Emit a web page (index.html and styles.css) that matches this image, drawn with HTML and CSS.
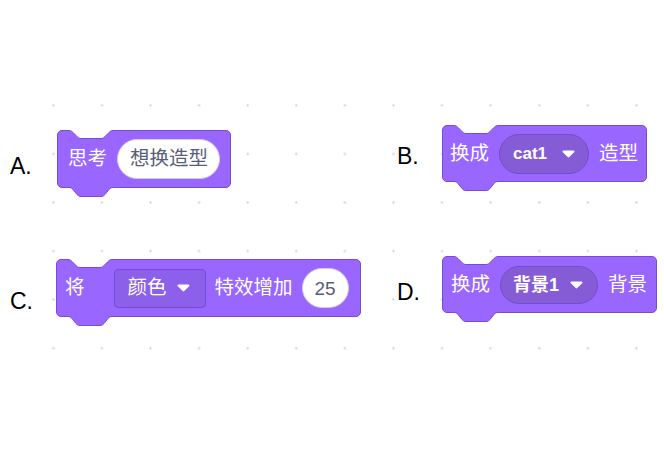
FILE: index.html
```html
<!DOCTYPE html>
<html lang="zh">
<head>
<meta charset="utf-8">
<title>Scratch 积木选择题</title>
<link rel="stylesheet" href="styles.css">
</head>
<body>
<div class="sheet">
  <div class="quiz">
    <div class="option opt-a">
      <span class="letter">A.</span>
      <div class="block block-a">
        <span class="notch"><svg width="44" height="9" viewBox="0 0 44 9"><path class="cut" d="M0,0 H44 V0.5 C42,0.5 41,1.5 40,2.5 L36,6.5 C35,7.5 34,8.5 32,8.5 H12 C10,8.5 9,7.5 8,6.5 L4,2.5 C3,1.5 2,0.5 0,0.5 Z"/><path class="edge" d="M0,0.5 C2,0.5 3,1.5 4,2.5 L8,6.5 C9,7.5 10,8.5 12,8.5 H32 C34,8.5 35,7.5 36,6.5 L40,2.5 C41,1.5 42,0.5 44,0.5"/></svg></span>
        <span class="text">思考</span>
        <span class="input">想换造型</span>
        <span class="tab"><svg width="44" height="11" viewBox="0 0 44 11"><path class="fill" d="M0,0 H44 V0.5 C42,0.5 41,1.5 40,2.5 L36,7.5 C35,8.5 34,9.5 32,9.5 H12 C10,9.5 9,8.5 8,7.5 L4,2.5 C3,1.5 2,0.5 0,0.5 Z"/><path class="edge" d="M0,0.5 C2,0.5 3,1.5 4,2.5 L8,7.5 C9,8.5 10,9.5 12,9.5 H32 C34,9.5 35,8.5 36,7.5 L40,2.5 C41,1.5 42,0.5 44,0.5"/></svg></span>
      </div>
    </div>
    <div class="option opt-b">
      <span class="letter">B.</span>
      <div class="block block-b">
        <span class="notch"><svg width="44" height="9" viewBox="0 0 44 9"><path class="cut" d="M0,0 H44 V0.5 C42,0.5 41,1.5 40,2.5 L36,6.5 C35,7.5 34,8.5 32,8.5 H12 C10,8.5 9,7.5 8,6.5 L4,2.5 C3,1.5 2,0.5 0,0.5 Z"/><path class="edge" d="M0,0.5 C2,0.5 3,1.5 4,2.5 L8,6.5 C9,7.5 10,8.5 12,8.5 H32 C34,8.5 35,7.5 36,6.5 L40,2.5 C41,1.5 42,0.5 44,0.5"/></svg></span>
        <span class="text">换成</span>
        <span class="menu">cat1<svg class="arrow" width="13" height="8" viewBox="0 0 13 8"><path d="M1.6,0.5 H11.4 C12.4,0.5 12.9,1.6 12.2,2.3 L7.3,7.1 C6.8,7.6 6.2,7.6 5.7,7.1 L0.8,2.3 C0.1,1.6 0.6,0.5 1.6,0.5 Z"/></svg></span>
        <span class="text">造型</span>
        <span class="tab"><svg width="44" height="11" viewBox="0 0 44 11"><path class="fill" d="M0,0 H44 V0.5 C42,0.5 41,1.5 40,2.5 L36,7.5 C35,8.5 34,9.5 32,9.5 H12 C10,9.5 9,8.5 8,7.5 L4,2.5 C3,1.5 2,0.5 0,0.5 Z"/><path class="edge" d="M0,0.5 C2,0.5 3,1.5 4,2.5 L8,7.5 C9,8.5 10,9.5 12,9.5 H32 C34,9.5 35,8.5 36,7.5 L40,2.5 C41,1.5 42,0.5 44,0.5"/></svg></span>
      </div>
    </div>
    <div class="option opt-c">
      <span class="letter">C.</span>
      <div class="block block-c">
        <span class="notch"><svg width="44" height="9" viewBox="0 0 44 9"><path class="cut" d="M0,0 H44 V0.5 C42,0.5 41,1.5 40,2.5 L36,6.5 C35,7.5 34,8.5 32,8.5 H12 C10,8.5 9,7.5 8,6.5 L4,2.5 C3,1.5 2,0.5 0,0.5 Z"/><path class="edge" d="M0,0.5 C2,0.5 3,1.5 4,2.5 L8,6.5 C9,7.5 10,8.5 12,8.5 H32 C34,8.5 35,7.5 36,6.5 L40,2.5 C41,1.5 42,0.5 44,0.5"/></svg></span>
        <span class="text text-wide">将</span>
        <span class="field">颜色<svg class="arrow" width="13" height="8" viewBox="0 0 13 8"><path d="M1.6,0.5 H11.4 C12.4,0.5 12.9,1.6 12.2,2.3 L7.3,7.1 C6.8,7.6 6.2,7.6 5.7,7.1 L0.8,2.3 C0.1,1.6 0.6,0.5 1.6,0.5 Z"/></svg></span>
        <span class="text">特效增加</span>
        <span class="input number">25</span>
        <span class="tab"><svg width="44" height="11" viewBox="0 0 44 11"><path class="fill" d="M0,0 H44 V0.5 C42,0.5 41,1.5 40,2.5 L36,7.5 C35,8.5 34,9.5 32,9.5 H12 C10,9.5 9,8.5 8,7.5 L4,2.5 C3,1.5 2,0.5 0,0.5 Z"/><path class="edge" d="M0,0.5 C2,0.5 3,1.5 4,2.5 L8,7.5 C9,8.5 10,9.5 12,9.5 H32 C34,9.5 35,8.5 36,7.5 L40,2.5 C41,1.5 42,0.5 44,0.5"/></svg></span>
      </div>
    </div>
    <div class="option opt-d">
      <span class="letter">D.</span>
      <div class="block block-d">
        <span class="notch"><svg width="44" height="9" viewBox="0 0 44 9"><path class="cut" d="M0,0 H44 V0.5 C42,0.5 41,1.5 40,2.5 L36,6.5 C35,7.5 34,8.5 32,8.5 H12 C10,8.5 9,7.5 8,6.5 L4,2.5 C3,1.5 2,0.5 0,0.5 Z"/><path class="edge" d="M0,0.5 C2,0.5 3,1.5 4,2.5 L8,6.5 C9,7.5 10,8.5 12,8.5 H32 C34,8.5 35,7.5 36,6.5 L40,2.5 C41,1.5 42,0.5 44,0.5"/></svg></span>
        <span class="text">换成</span>
        <span class="menu">背景1<svg class="arrow" width="13" height="8" viewBox="0 0 13 8"><path d="M1.6,0.5 H11.4 C12.4,0.5 12.9,1.6 12.2,2.3 L7.3,7.1 C6.8,7.6 6.2,7.6 5.7,7.1 L0.8,2.3 C0.1,1.6 0.6,0.5 1.6,0.5 Z"/></svg></span>
        <span class="text">背景</span>
        <span class="tab"><svg width="44" height="11" viewBox="0 0 44 11"><path class="fill" d="M0,0 H44 V0.5 C42,0.5 41,1.5 40,2.5 L36,7.5 C35,8.5 34,9.5 32,9.5 H12 C10,9.5 9,8.5 8,7.5 L4,2.5 C3,1.5 2,0.5 0,0.5 Z"/><path class="edge" d="M0,0.5 C2,0.5 3,1.5 4,2.5 L8,7.5 C9,8.5 10,9.5 12,9.5 H32 C34,9.5 35,8.5 36,7.5 L40,2.5 C41,1.5 42,0.5 44,0.5"/></svg></span>
      </div>
    </div>
  </div>
</div>
</body>
</html>
```

FILE: styles.css
```css
* {
  box-sizing: border-box;
}

html,
body {
  margin: 0;
  background: #ffffff;
}

body {
  width: 664px;
  height: 473px;
  overflow: hidden;
  font-family: "Liberation Sans", "Noto Sans CJK SC", sans-serif;
}

.sheet {
  box-sizing: content-box;
  padding: 81px 4px 0 29px;
  height: 292px;
  background-image: radial-gradient(circle, #d3d3da 0, #d3d3da 0.8px, rgba(255, 255, 255, 0) 1.5px);
  background-size: 48.6px 48.6px;
  background-origin: content-box;
  background-clip: content-box;
}

.quiz {
  margin: 44px 0 0 -19px;
  display: grid;
  grid-template-columns: 387px auto;
  row-gap: 68px;
  align-items: start;
}

.option {
  display: flex;
  align-items: flex-start;
}

.letter {
  flex: none;
  font-family: "Liberation Sans", Arial, sans-serif;
  font-size: 23px;
  line-height: 26px;
  color: #000000;
}

.opt-a .letter { width: 47px; margin-top: 27.5px; }
.opt-b .letter { width: 45px; margin-top: 17.5px; }
.opt-c .letter { width: 46px; margin-top: 31.5px; }
.opt-d .letter { width: 45px; margin-top: 22.5px; }

.opt-a .block { margin-top: 5px; }
.opt-c .block { margin-top: 3px; }

.block {
  position: relative;
  display: flex;
  align-items: center;
  gap: 10px;
  height: 58px;
  padding: 0 8px;
  background: #9966ff;
  border: 1px solid #774dcb;
  border-radius: 5px;
  color: #ffffff;
  font-size: 19.5px;
  line-height: 1;
}

.block-a { padding: 0 10px; }
.block-b { height: 57px; padding: 0 8px 0 7px; }
.block-c { padding: 0 11px 0 8px; gap: 9px; }
.block-d { height: 57px; padding: 0 9px 0 8px; }

.notch {
  position: absolute;
  top: -1px;
  left: 11px;
  display: block;
  width: 44px;
  height: 9px;
}

.tab {
  position: absolute;
  bottom: -11px;
  left: 11px;
  display: block;
  width: 44px;
  height: 11px;
}

.notch svg,
.tab svg {
  display: block;
}

.cut {
  fill: #ffffff;
}

.fill {
  fill: #9966ff;
}

.edge {
  fill: none;
  stroke: #774dcb;
  stroke-width: 1;
}

.text {
  white-space: nowrap;
}

.text-wide {
  margin-right: 20px;
}

.input {
  display: flex;
  align-items: center;
  height: 40px;
  padding: 0 11px 0 12px;
  background: #ffffff;
  border: 1px solid #d4cce6;
  border-radius: 20px;
  color: #575e75;
  white-space: nowrap;
}

.number {
  padding: 0 12px;
  font-size: 19px;
}

.menu {
  display: flex;
  align-items: center;
  gap: 15px;
  height: 40px;
  padding: 0 13px 0 13px;
  background: #855cd6;
  border: 1px solid #774dcb;
  border-radius: 20px;
  color: #ffffff;
  font-weight: bold;
  font-size: 17px;
  white-space: nowrap;
}

.block-d .menu {
  height: 38px;
  gap: 11px;
  padding: 0 14px 0 12px;
  font-size: 18px;
}

.field {
  display: flex;
  align-items: center;
  gap: 10px;
  height: 39px;
  padding: 0 15px 0 13px;
  background: #8c60ea;
  border: 1px solid #774dcb;
  border-radius: 4px;
  color: #ffffff;
  white-space: nowrap;
}

.arrow {
  display: block;
  flex: none;
}

.arrow path {
  fill: #ffffff;
}
```
